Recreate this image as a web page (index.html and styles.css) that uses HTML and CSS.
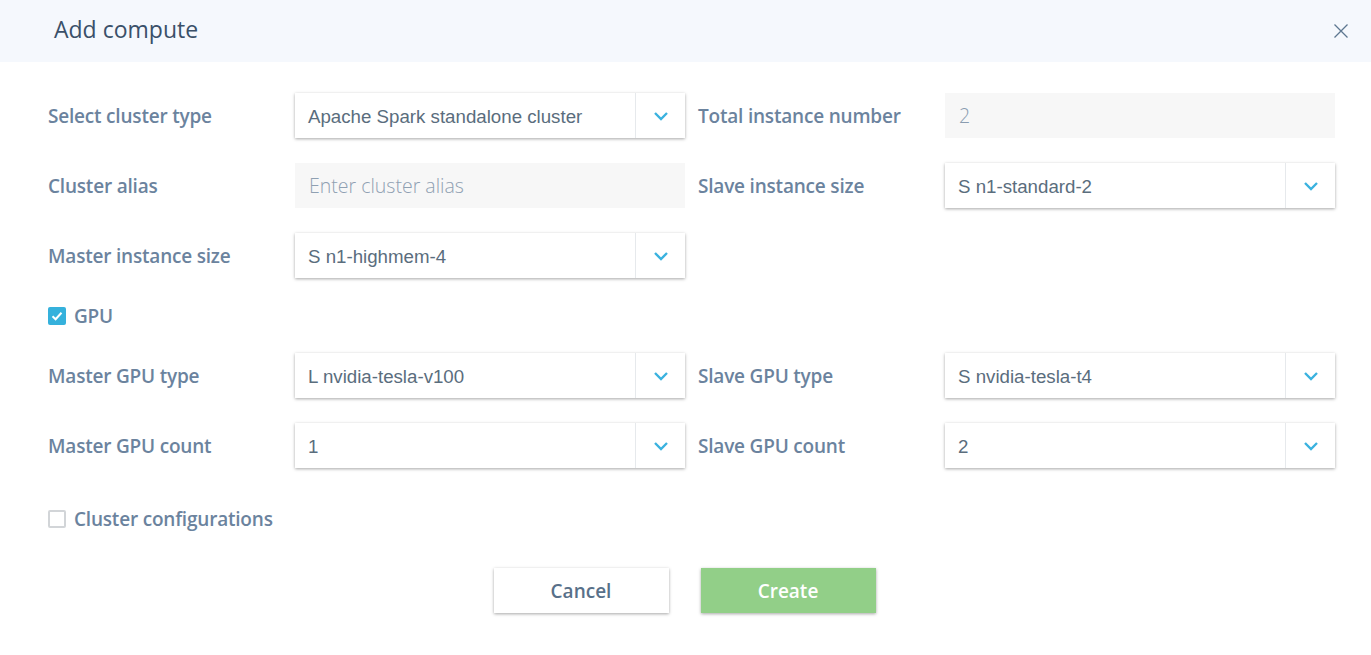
FILE: index.html
```html
<!DOCTYPE html>
<html>
<head>
<meta charset="utf-8">
<link rel="stylesheet" href="styles.css">
</head>
<body>
<div class="modal">
  <div class="header">
    <h1 class="title">Add compute</h1>
    <button class="close" aria-label="Close">
      <svg width="16" height="16" viewBox="0 0 16 16"><path d="M1.5 1.5L14.5 14.5M14.5 1.5L1.5 14.5" stroke="#5d7790" stroke-width="1.3" fill="none"/></svg>
    </button>
  </div>
  <div class="body">
    <div class="grid">
      <div class="label">Select cluster type</div>
      <div class="select"><span class="value">Apache Spark standalone cluster</span><span class="arrow"><svg width="16" height="10" viewBox="0 0 16 10"><path d="M2 2L8 8L14 2" stroke="#3ab2df" stroke-width="2.4" fill="none"/></svg></span></div>
      <div class="label">Total instance number</div>
      <div class="input disabled">2</div>

      <div class="label">Cluster alias</div>
      <div class="input placeholder">Enter cluster alias</div>
      <div class="label">Slave instance size</div>
      <div class="select"><span class="value">S n1-standard-2</span><span class="arrow"><svg width="16" height="10" viewBox="0 0 16 10"><path d="M2 2L8 8L14 2" stroke="#3ab2df" stroke-width="2.4" fill="none"/></svg></span></div>

      <div class="label">Master instance size</div>
      <div class="select"><span class="value">S n1-highmem-4</span><span class="arrow"><svg width="16" height="10" viewBox="0 0 16 10"><path d="M2 2L8 8L14 2" stroke="#3ab2df" stroke-width="2.4" fill="none"/></svg></span></div>
      <div></div>
      <div></div>
    </div>

    <label class="check gpu"><span class="box checked"><svg width="18" height="18" viewBox="0 0 18 18"><path d="M4.5 9.2L7.6 12.2L13.5 5.8" stroke="#fff" stroke-width="2" fill="none"/></svg></span>GPU</label>

    <div class="grid">
      <div class="label">Master GPU type</div>
      <div class="select"><span class="value">L nvidia-tesla-v100</span><span class="arrow"><svg width="16" height="10" viewBox="0 0 16 10"><path d="M2 2L8 8L14 2" stroke="#3ab2df" stroke-width="2.4" fill="none"/></svg></span></div>
      <div class="label">Slave GPU type</div>
      <div class="select"><span class="value">S nvidia-tesla-t4</span><span class="arrow"><svg width="16" height="10" viewBox="0 0 16 10"><path d="M2 2L8 8L14 2" stroke="#3ab2df" stroke-width="2.4" fill="none"/></svg></span></div>

      <div class="label">Master GPU count</div>
      <div class="select"><span class="value">1</span><span class="arrow"><svg width="16" height="10" viewBox="0 0 16 10"><path d="M2 2L8 8L14 2" stroke="#3ab2df" stroke-width="2.4" fill="none"/></svg></span></div>
      <div class="label">Slave GPU count</div>
      <div class="select"><span class="value">2</span><span class="arrow"><svg width="16" height="10" viewBox="0 0 16 10"><path d="M2 2L8 8L14 2" stroke="#3ab2df" stroke-width="2.4" fill="none"/></svg></span></div>
    </div>

    <label class="check conf"><span class="box"></span>Cluster configurations</label>

    <div class="actions">
      <button class="btn cancel">Cancel</button>
      <button class="btn create">Create</button>
    </div>
  </div>
</div>
</body>
</html>
```
FILE: styles.css
```css
* { box-sizing: border-box; }
html, body { margin: 0; padding: 0; background: #fff; }
body { font-family: "Open Sans", sans-serif; width: 1371px; height: 655px; overflow: hidden; }
.modal { width: 1371px; }
.header {
  height: 62px;
  background: #f5f8fd;
  display: flex;
  align-items: center;
  justify-content: space-between;
  padding: 0 18px 4px 54px;
}
.title {
  margin: 0;
  font-size: 23px;
  font-weight: 400;
  color: #3a5069;
}
.close { border: 0; background: transparent; padding: 0; width: 24px; height: 24px; display: flex; align-items: center; justify-content: center; cursor: pointer; margin-top: 4px; }
.body { padding: 31px 36px 0 48px; }
.grid {
  display: grid;
  grid-template-columns: 247px 390px 260px 390px;
  grid-auto-rows: 45px;
  row-gap: 25px;
  align-items: center;
}
.grid > div:nth-child(4n+3) { padding-left: 13px; }
.label {
  font-size: 19px;
  font-weight: 600;
  color: #6b839e;
  letter-spacing: -0.2px;
}
.select {
  height: 45px;
  display: flex;
  background: #fff;
  box-shadow: 0 1px 3px rgba(0,0,0,0.35);
}
.select .value {
  flex: 1;
  display: flex;
  align-items: center;
  padding: 3px 0 0 13px;
  font-family: "Liberation Sans", Arial, sans-serif;
  font-size: 18.7px;
  color: #5a6d7d;
}
.select .arrow {
  width: 50px;
  border-left: 1px solid #e6e9ec;
  display: flex;
  align-items: center;
  justify-content: center;
}
.input {
  height: 45px;
  background: #f7f7f7;
  display: flex;
  align-items: center;
  font-size: 19.5px;
  font-weight: 300;
  color: #8a9cb0;
}
.input.placeholder { padding-left: 14px; color: #8fa0b2; }
.input.disabled { padding-left: 14px; }
.check {
  display: flex;
  align-items: center;
  gap: 8px;
  font-size: 19px;
  font-weight: 600;
  color: #6b839e;
  letter-spacing: -0.2px;
}
.gpu { margin: 18px 0 17px; height: 40px; }
.conf { margin: 31px 0 0; height: 40px; }
.box {
  width: 18px;
  height: 18px;
  border: 2px solid #d2d5d8;
  border-radius: 2px;
  display: inline-flex;
  align-items: center;
  justify-content: center;
  background: #fff;
}
.box.checked { background: #35b1dc; border: 0; border-radius: 2px; }
.actions {
  display: flex;
  justify-content: center;
  gap: 32px;
  margin: 29px 0 0 -49px;
  width: 1371px;
}
.btn {
  width: 175px;
  height: 45px;
  border: 0;
  font-family: "Open Sans", sans-serif;
  font-size: 19px;
  font-weight: 600;
  cursor: pointer;
  box-shadow: 0 1px 3px rgba(0,0,0,0.35);
}
.cancel { background: #fff; color: #587089; }
.create { background: #92cf88; color: #fff; }
```
